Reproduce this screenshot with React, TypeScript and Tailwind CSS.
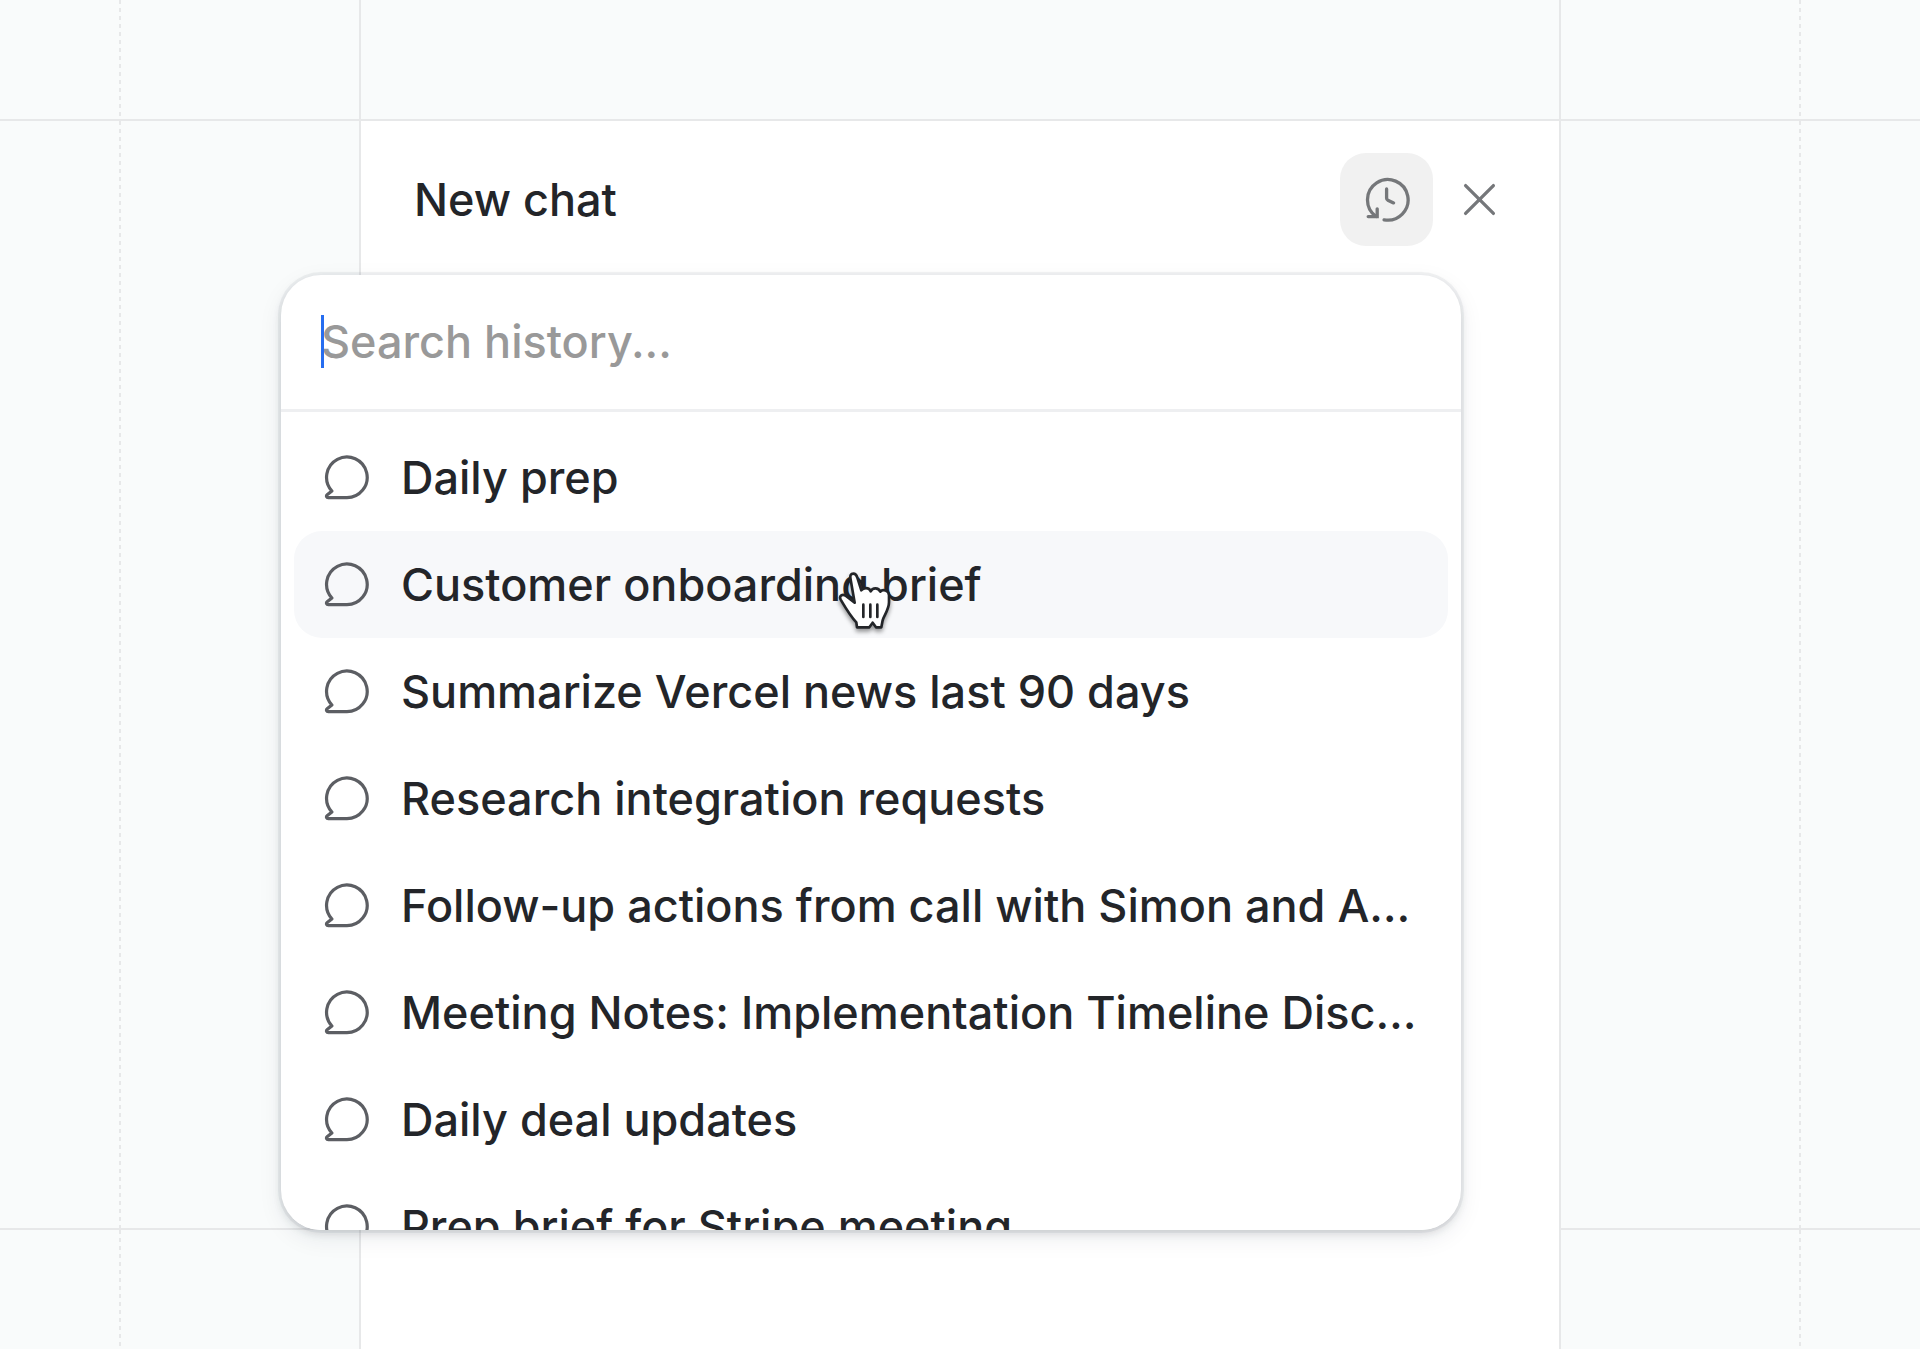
import React from "react";

const chats = [
  "Daily prep",
  "Customer onboarding brief",
  "Summarize Vercel news last 90 days",
  "Research integration requests",
  "Follow-up actions from call with Simon and A…",
  "Meeting Notes: Implementation Timeline Disc…",
  "Daily deal updates",
  "Prep brief for Stripe meeting",
];

const dashed =
  "w-0.5 shrink-0 bg-[repeating-linear-gradient(to_bottom,#e7e8e9_0px,#e7e8e9_4px,transparent_4px,transparent_8px)]";

function Rail({ side }: { side: "left" | "right" }) {
  const row = side === "left" ? "flex justify-start" : "flex justify-end";
  const gap = side === "left" ? "w-1/3 -mr-px shrink-0" : "w-1/3 -ml-px shrink-0";
  const cell = (
    <>
      {side === "left" && <div className={gap} />}
      <div className={dashed} />
      {side === "right" && <div className={gap} />}
    </>
  );
  return (
    <div aria-hidden="true" className="flex flex-col">
      <div className={`${row} h-[121px] border-b-2 border-[#e7e8e9]`}>{cell}</div>
      <div className={`${row} h-[1109px] border-b-2 border-[#e7e8e9]`}>{cell}</div>
      <div className={`${row} flex-1`}>{cell}</div>
    </div>
  );
}

function HistoryIcon() {
  return (
    <svg viewBox="0 0 48 48" className="size-12" fill="none" stroke="#75777a" strokeWidth="3.3" strokeLinecap="round" strokeLinejoin="miter" aria-hidden="true">
      <path d="M21.1 43.8A20.3 20.3 0 1 0 13.2 40.5" />
      <path d="M14.2 32.8V40.6H5.2" />
      <path d="M23.6 13v9.2c0 .9.5 1.6 1.3 2l5.7 2.7" strokeLinejoin="round" />
    </svg>
  );
}

function ChatIcon() {
  return (
    <svg viewBox="0 0 48 48" className="size-12 shrink-0" fill="none" stroke="#5c5e63" strokeWidth="3.2" strokeLinejoin="round" aria-hidden="true">
      <path d="M23.5 43.6A20.3 20.3 0 1 0 8.9 37L4.4 40.6C2.7 42 3.6 43.6 5.3 43.6Z" />
    </svg>
  );
}

function HandCursor() {
  return (
    <svg viewBox="54 96 165 192" className="pointer-events-none absolute left-[544px] top-[40px] h-16 w-[55px] drop-shadow-[0_3px_2px_rgba(0,0,0,0.4)]" aria-hidden="true">
      <path
        d="M104 191L92 122C89 108 93 104 100 104C106 104 110 109 112 116L124 154C129 146 147 143 152 157C158 145 175 145 181 158C188 149 207 154 207 169V190C207 212 191 231 188 244L184 265H168L158 251L148 265H111L109 250C96 237 72 199 62 182C56 170 68 163 78 171Z"
        fill="#fff"
        stroke="#232529"
        strokeWidth="8"
        strokeLinejoin="round"
      />
      <path d="M130 197V234M151 197V234M172 197V234" fill="none" stroke="#232529" strokeWidth="8" strokeLinecap="round" />
    </svg>
  );
}

function HistoryMenu() {
  return (
    <div
      role="dialog"
      aria-label="Chat history"
      className="absolute -left-20 right-[98px] top-[154px] z-10 flex h-[955px] flex-col overflow-hidden rounded-[40px] bg-white shadow-[0_0_0_3px_rgba(28,40,64,0.05),0_4px_8px_rgba(28,30,40,0.12),0_8px_24px_rgba(28,40,64,0.08)]"
    >
      <div className="relative flex h-[137px] shrink-0 items-center border-b-3 border-[#eeeff1] px-10">
        <span aria-hidden="true" className="absolute left-10 top-10 h-[53px] w-[3px] bg-[#266df0]" />
        <label htmlFor="history-search" className="sr-only">
          Search history
        </label>
        <input
          id="history-search"
          type="text"
          placeholder="Search history..."
          className="w-full bg-transparent text-[45px] leading-[60px] font-medium text-[#232529] outline-none placeholder:text-[#999999] placeholder:opacity-100"
        />
      </div>
      <ul className="flex flex-col px-[13px] py-3">
        {chats.map((title, index) => (
          <li key={title} className="relative">
            <button
              type="button"
              className={`flex h-[107px] w-full items-center gap-[30px] rounded-[28px] pl-[29px] text-left text-[45px] font-medium leading-[60px] whitespace-nowrap text-[#232529] ${
                index === 1 ? "bg-[#f7f8fa]" : "bg-white"
              }`}
            >
              <ChatIcon />
              <span>{title}</span>
            </button>
            {index === 1 && <HandCursor />}
          </li>
        ))}
      </ul>
    </div>
  );
}

export default function App() {
  return (
    <main className="grid min-h-screen grid-cols-[3fr_10fr_3fr] bg-[#f9fbfb] font-['Inter',sans-serif]">
      <Rail side="left" />
      <div className="-mx-px flex flex-col border-x-2 border-[#e7e8e9]">
        <div className="h-[121px] border-b-2 border-[#e7e8e9]" />
        <section className="relative flex-1 bg-white">
          <header className="flex items-center justify-between pt-8 pr-[33px] pl-[53px]">
            <h1 className="text-[45px] font-medium leading-[60px] text-[#232529]">New chat</h1>
            <div className="flex items-center">
              <button type="button" aria-label="Chat history" className="flex size-[93px] items-center justify-center rounded-[26px] bg-[#f1f1f1]">
                <HistoryIcon />
              </button>
              <button type="button" aria-label="Close" className="flex size-[93px] items-center justify-center">
                <svg viewBox="0 0 48 48" className="size-12" fill="none" stroke="#75777a" strokeWidth="3.3" strokeLinecap="round" aria-hidden="true">
                  <path d="M9.6 9.6L37.4 37.4M37.4 9.6L9.6 37.4" />
                </svg>
              </button>
            </div>
          </header>
          <HistoryMenu />
        </section>
      </div>
      <Rail side="right" />
    </main>
  );
}
